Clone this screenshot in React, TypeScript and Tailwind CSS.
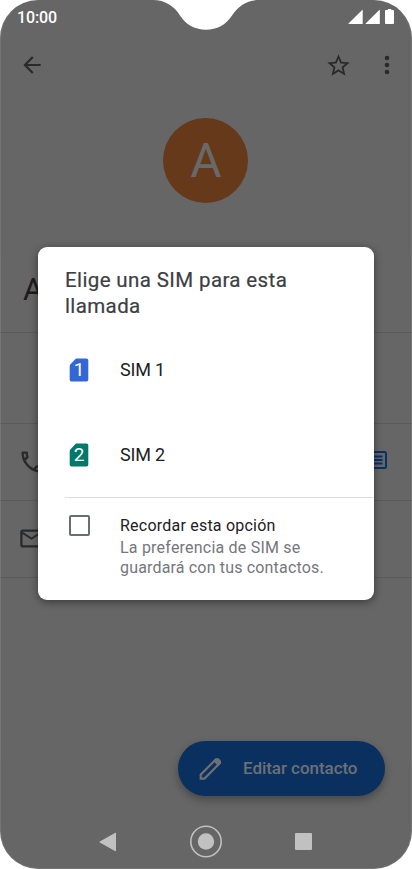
import type { ReactNode } from 'react'

function StatusBar() {
  return (
    <div className="flex h-[34px] items-center justify-between pl-[17px] pr-[17px] text-white">
      <span className="mt-[2px] font-['Roboto',sans-serif] text-[16px] font-medium tracking-[-0.1px]">10:00</span>
      <svg width="47" height="16" viewBox="0 0 47 16" fill="currentColor">
        <path d="M0.500 15V14.600L14.700 0.600V15Z" />
        <path d="M17.600 15V14.600L31.800 0.600V15Z" />
        <path d="M39.800 0h3.400v1h1.800q1 0 1 1V14q0 1-1 1H38q-1 0-1-1V2q0-1 1-1h1.800z" />
      </svg>
    </div>
  )
}

function Notch() {
  return (
    <svg className="absolute left-[150px] top-0" width="112" height="30" viewBox="0 0 112 30" fill="#fff">
      <path d="M3 0C15 0 24 6 30 15.500C36 25 45.500 29.700 56 29.700S76 25 82 15.500C88 6 97 0 109 0Z" />
    </svg>
  )
}

function Toolbar() {
  return (
    <div className="flex h-[62px] items-center pl-[19px] pr-3 text-[#292a2c]">
      <svg width="26" height="26" viewBox="0 0 24 24" fill="currentColor">
        <path d="M20 11H7.830l5.590-5.590L12 4l-8 8 8 8 1.410-1.410L7.830 13H20v-2z" />
      </svg>
      <div className="grow" />
      <svg width="27" height="27" viewBox="0 0 24 24" fill="currentColor">
        <path d="M22 9.240l-7.190-.62L12 2 9.190 8.630 2 9.240l5.460 4.730L5.820 21 12 17.270 18.180 21l-1.630-7.030L22 9.240zM12 15.400l-3.760 2.270 1-4.280-3.320-2.880 4.380-.38L12 6.100l1.710 4.040 4.380.38-3.320 2.880 1 4.280L12 15.400z" />
      </svg>
      <svg className="ml-[22px]" width="26" height="26" viewBox="0 0 26 26" fill="currentColor">
        <circle cx="13" cy="6" r="2.300" />
        <circle cx="13" cy="13" r="2.300" />
        <circle cx="13" cy="20" r="2.300" />
      </svg>
    </div>
  )
}

function ContactPage() {
  return (
    <>
      <div className="flex justify-center pr-px pt-[22px]">
        <div className="flex size-[85px] items-center justify-center rounded-full bg-[#66391a] pl-px font-['Roboto',sans-serif] text-[48px] leading-none text-[#696969]">
          A
        </div>
      </div>
      <div className="mt-[43px] flex h-[87px] border-b border-[#5a5a5a] pl-[23px] pt-[26px] font-['Roboto',sans-serif] text-[31px] leading-[36px] text-[#1b1c1d]">
        A
      </div>
      <div className="h-[91px] border-b border-[#5a5a5a]" />
      <div className="flex h-[77px] items-center justify-between border-b border-[#5a5a5a] pl-[18px] pr-[21px]">
        <svg className="-mt-px" width="28" height="28" viewBox="0 0 24 24" fill="#292a2c">
          <path d="M6.540 5c.06.890.210 1.760.450 2.590l-1.200 1.200c-.41-1.200-.67-2.470-.76-3.790h1.510m9.860 12.020c.850.240 1.720.390 2.600.450v1.490c-1.320-.09-2.590-.35-3.800-.75l1.200-1.190M7.500 3H4c-.55 0-1 .450-1 1 0 9.390 7.610 17 17 17 .550 0 1-.45 1-1v-3.490c0-.55-.45-1-1-1-1.240 0-2.450-.2-3.570-.57-.1-.04-.21-.05-.31-.05-.26 0-.51.100-.71.290l-2.200 2.200c-2.830-1.450-5.150-3.760-6.590-6.590l2.200-2.200c.280-.28.360-.67.250-1.020C8.700 6.450 8.500 5.250 8.500 4c0-.55-.45-1-1-1z" />
        </svg>
        <svg className="mt-[-5px]" width="26" height="26" viewBox="0 0 26 26" fill="none" stroke="#0a3069">
          <rect x="3" y="5" width="18" height="16" rx="1.500" strokeWidth="2" />
          <path d="M7 9.500h10.500M7 13h10.500M7 16.500h10.500" strokeWidth="2" />
        </svg>
      </div>
      <div className="flex h-[77px] items-center border-b border-[#5a5a5a] pl-[18px]">
        <svg className="-mt-px" width="27" height="27" viewBox="0 0 24 24" fill="#292a2c">
          <path d="M22 6c0-1.100-.9-2-2-2H4c-1.100 0-2 .9-2 2v12c0 1.100.9 2 2 2h16c1.100 0 2-.9 2-2V6zm-2 0l-8 5-8-5h16zm0 12H4V8l8 5 8-5v10z" />
        </svg>
      </div>
    </>
  )
}

function EditButton() {
  return (
    <div className="mb-[19px] mr-[27px] flex h-[55px] w-[207px] items-center self-end rounded-full bg-[#0a3060] pl-[19px] text-[#6c7076] shadow-[0_4px_8px_rgba(0,0,0,0.3)]">
      <svg className="ml-px" width="25" height="26" viewBox="0 0 25 26" fill="none" stroke="currentColor" strokeWidth="2.200">
        <path d="M2.700 22.600V18.800L17.500 3.700L21.400 7.500L6.500 22.600Z" />
        <path d="M16.500 4.800L17.900 3.500Q19.200 2.500 20.400 3.600L21.500 4.700Q22.600 5.900 21.500 7.200L20.300 8.600Z" fill="currentColor" strokeLinejoin="round" />
      </svg>
      <span className="ml-[20px] whitespace-nowrap font-['Roboto',sans-serif] text-[17px] font-medium tracking-[-0.05px]">
        Editar contacto
      </span>
    </div>
  )
}

function NavBar() {
  return (
    <div className="flex h-[54px] items-center justify-between pb-px pl-[98px] pr-[100px] text-[#c1c1c1]">
      <svg width="19" height="20" viewBox="0 0 19 20" fill="currentColor" stroke="currentColor" strokeLinejoin="round">
        <path d="M1.800 10L17.500 1.200V18.800Z" />
      </svg>
      <svg width="33" height="33" viewBox="0 0 33 33" fill="currentColor">
        <circle cx="16" cy="16.500" r="15.200" fill="none" stroke="currentColor" strokeWidth="1.600" />
        <circle cx="16" cy="16.500" r="8.200" />
      </svg>
      <div className="size-[17px] rounded-[1px] bg-current" />
    </div>
  )
}

function SimOption({ num, color }: { num: number; color: string }) {
  return (
    <div className="flex h-[85px] items-center">
      <div className="relative flex h-[24px] w-[20px] items-center justify-center">
        <svg className="absolute inset-0" width="20" height="24" viewBox="0 0 20 24" fill={color}>
          <path d="M7.500 0.500H17.500Q19.300 0.500 19.300 2.300V21.700Q19.300 23.500 17.500 23.500H2.500Q0.700 23.500 0.700 21.700V8Q0.700 7.200 1.300 6.600L6.200 1.200Q6.800 0.500 7.500 0.500Z" />
        </svg>
        <span className="relative font-['Roboto',sans-serif] text-[19px] leading-none text-white">{num}</span>
      </div>
      <span className="ml-[31px] font-['Roboto',sans-serif] text-[18px] tracking-[-0.2px] text-[#202124]">SIM {num}</span>
    </div>
  )
}

function Dialog({ title, children }: { title: string; children: ReactNode }) {
  return (
    <div className="absolute left-[38px] top-[247px] h-[353px] w-[336px] rounded-[9px] bg-white pl-[27px] pt-[20px] shadow-[0_2px_9px_rgba(0,0,0,0.45)]">
      <h1 className="w-[240px] font-['Roboto',sans-serif] text-[20.5px] leading-[26px] tracking-[0.38px] text-[#3c4043] [-webkit-text-stroke:0.2px_#3c4043]">{title}</h1>
      {children}
    </div>
  )
}

export default function App() {
  return (
    <div className="h-[869px] w-[412px] overflow-hidden bg-white">
      <div className="relative flex h-full flex-col overflow-hidden rounded-[38px] bg-[#666]">
        <StatusBar />
        <Notch />
        <Toolbar />
        <ContactPage />
        <div className="grow" />
        <EditButton />
        <NavBar />
        <Dialog title="Elige una SIM para esta llamada">
          <div className="mt-[8px] pl-[4px]">
            <SimOption num={1} color="#3367d6" />
            <SimOption num={2} color="#00796b" />
          </div>
          <div className="flex border-t border-[#dadce0] pl-[4px] pt-[17px] font-['Roboto',sans-serif]">
            <div className="size-[21px] shrink-0 rounded-[2px] border-2 border-[#6a6d72]" />
            <div className="ml-[30px] mt-px whitespace-nowrap text-[16px] leading-[20px] text-[#74777b]">
              <div className="mb-[2px] tracking-[0.22px] text-[#202124]">Recordar esta opción</div>
              <div className="tracking-[0.21px]">La preferencia de SIM se</div>
              <div className="tracking-[0.17px]">guardará con tus contactos.</div>
            </div>
          </div>
        </Dialog>
        <div className="pointer-events-none absolute inset-0 rounded-[38px] border border-white/10 border-t-transparent" />
      </div>
    </div>
  )
}
